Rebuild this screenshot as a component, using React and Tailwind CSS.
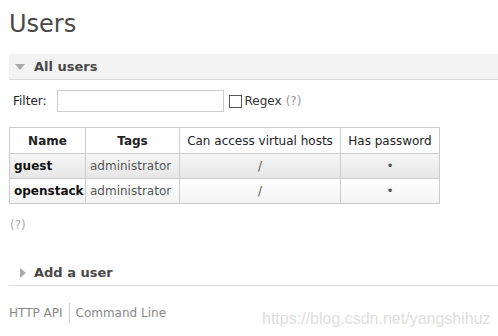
import React from 'react';

const users = [
    { name: 'guest', tags: 'administrator', vhosts: '/', pw: true },
    { name: 'openstack', tags: 'administrator', vhosts: '/', pw: true },
];

const SectionHeader = ({ open, title }) => (
    <div className={`flex items-center h-[26px] ml-[9px] border-b border-[#dcdcdc] ${open ? 'bg-[#f3f3f3]' : 'bg-white'}`}>
        {open ? (
            <span className="ml-[6px] w-0 h-0 border-l-[5px] border-r-[5px] border-t-[6px] border-l-transparent border-r-transparent border-t-[#aaaaaa]" />
        ) : (
            <span className="ml-[11px] w-0 h-0 border-t-[5px] border-b-[5px] border-l-[6px] border-t-transparent border-b-transparent border-l-[#aaaaaa]" />
        )}
        <span className={`${open ? 'ml-[9px]' : 'ml-[8px]'} text-[13px] font-bold text-[#484848]`}>{title}</span>
    </div>
);

export default function App() {
    return (
        <div className="w-[498px] h-[336px] bg-white overflow-hidden relative font-['DejaVu_Sans',Verdana,sans-serif] text-[12px] text-[#444]">
            <h1 className="pl-[9px] pt-[9px] text-[24px] leading-[30px] text-[#4a4a4a]">Users</h1>

            <div className="mt-[15px]">
                <SectionHeader open title="All users" />
            </div>

            <div className="flex items-center mt-[10px] pl-[13px] h-[22px]">
                <span className="text-[#222]">Filter:</span>
                <input className="ml-[10px] w-[167px] h-[22px] border border-[#cccccc] bg-white" />
                <span className="ml-[5px] w-[13px] h-[13px] border border-[#555] bg-white" />
                <span className="ml-[3px] text-[#333]">Regex</span>
                <span className="ml-[4px] text-[#999]">(?)</span>
            </div>

            <table className="mt-[15px] ml-[9px] border-collapse table-fixed w-[431px] text-[12px]">
                <thead>
                    <tr className="h-[26px] bg-white">
                        <th className="w-[76px] border border-[#cccccc] font-bold text-[#222]">Name</th>
                        <th className="w-[94px] border border-[#cccccc] font-bold text-[#222]">Tags</th>
                        <th className="w-[161px] border border-[#cccccc] font-normal text-[#222] whitespace-nowrap">Can access virtual hosts</th>
                        <th className="w-[99px] border border-[#cccccc] font-normal text-[#222] whitespace-nowrap">Has password</th>
                    </tr>
                </thead>
                <tbody>
                    {users.map((u, i) => (
                        <tr key={u.name} className={`h-[25px] ${i === 0 ? 'bg-[linear-gradient(#f6f6f6,#e6e6e6)]' : 'bg-[linear-gradient(#ffffff,#f3f3f3)]'}`}>
                            <td className="border border-[#cccccc] px-[4px] font-bold text-[#111]">{u.name}</td>
                            <td className="border border-[#cccccc] px-[4px] text-[#555]">{u.tags}</td>
                            <td className="border border-[#cccccc] text-center text-[#555]">{u.vhosts}</td>
                            <td className="border border-[#cccccc] text-center text-[#555]">{u.pw ? '•' : ''}</td>
                        </tr>
                    ))}
                </tbody>
            </table>

            <div className="mt-[12px] pl-[10px] text-[#aaa]">(?)</div>

            <div className="mt-[26px]">
                <SectionHeader title="Add a user" />
            </div>

            <div className="flex items-center mt-[17px] pl-[9px] text-[#888] h-[20px]">
                <span>HTTP API</span>
                <span className="mx-[6px] w-px h-[20px] bg-[#cccccc]" />
                <span>Command Line</span>
            </div>

            <div className="absolute left-[262px] top-[307px] font-['Liberation_Sans',Arial,sans-serif] text-[16px] text-[#dedede]">
                https://blog.csdn.net/yangshihuz
            </div>
        </div>
    );
}
